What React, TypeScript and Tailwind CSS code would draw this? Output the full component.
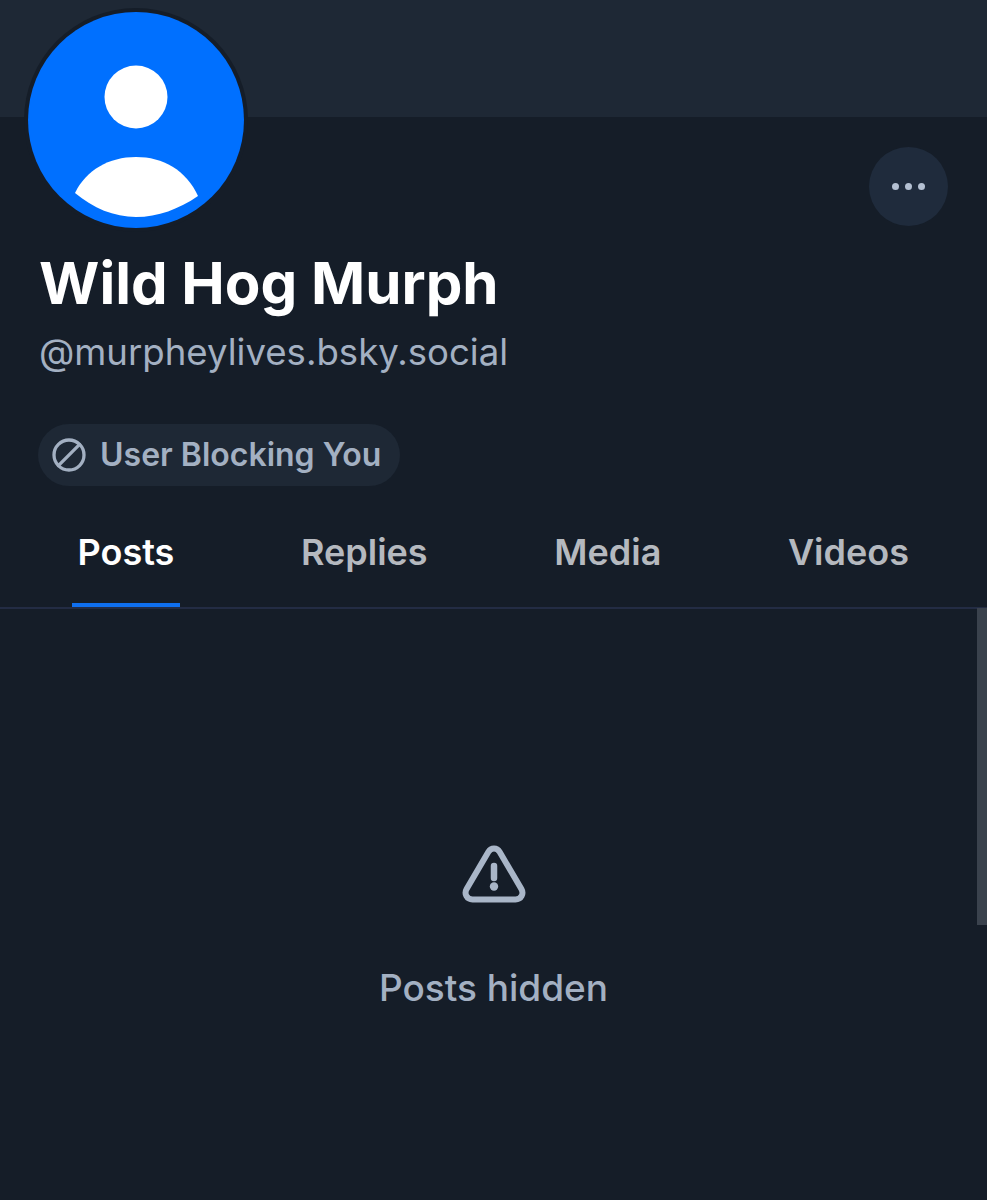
import { Ban } from 'lucide-react'

const tabs = ['Posts', 'Replies', 'Media', 'Videos']

function Avatar() {
  return (
    <div className="absolute left-[24px] top-[8px] h-[224px] w-[224px] rounded-full bg-[#151d28] p-[4px]">
      <svg viewBox="0 0 216 216" className="h-[216px] w-[216px]">
        <circle cx="108" cy="108" r="108" fill="#0070ff" />
        <circle cx="108" cy="85" r="31.5" fill="#fff" />
        <path d="M47 181 C58 158 81 145 108 145 C135 145 158 158 170 184 C151 197 130 205 108 205 C86 205 65 196 47 181 Z" fill="#fff" />
      </svg>
    </div>
  )
}

export default function App() {
  return (
    <div className="relative h-[1200px] w-[987px] overflow-hidden bg-[#151d28] font-['Inter',sans-serif]">
      <div className="h-[117px] bg-[#1e2835]" />
      <Avatar />

      <div className="flex justify-end pr-[39px] pt-[30px]">
        <button className="flex h-[79px] w-[79px] items-center justify-center gap-[6px] rounded-full bg-[#1f2b3c]">
          <span className="h-[7px] w-[7px] rounded-full bg-[#b4c0d2]" />
          <span className="h-[7px] w-[7px] rounded-full bg-[#b4c0d2]" />
          <span className="h-[7px] w-[7px] rounded-full bg-[#b4c0d2]" />
        </button>
      </div>

      <div className="px-[39px]">
        <h1 className="mt-[17px] text-[58.2px] font-bold leading-[80px] text-white">Wild Hog Murph</h1>
        <p className="mt-[4px] text-[36.6px] leading-[50px] text-[#a3b0c2]">@murpheylives.bsky.social</p>
        <div className="-ml-[1px] mt-[47px] inline-flex h-[62px] items-center gap-[13px] rounded-full bg-[#1e2835] pl-[13px] pr-[19px]">
          <Ban size={36} strokeWidth={2.2} className="text-[#a3b0c2] -scale-x-100" />
          <span className="text-[32px] font-semibold text-[#a3b0c2]">User Blocking You</span>
        </div>
      </div>

      <div className="mt-[15px] flex h-[108px] justify-between border-b-[2px] border-[#232c44] pl-[72px] pr-[72.5px]">
        {tabs.map((tab, i) => (
          <div key={tab} className={`flex h-full flex-col items-center justify-center border-b-[4px] px-[5.5px] text-[36px] font-semibold ${i === 0 ? 'border-[#0f6fef] text-white' : 'border-transparent text-[#b5b9bf]'}`}>
            {tab}
          </div>
        ))}
      </div>

      <div className="flex flex-col items-center pt-[236px]">
        <svg viewBox="0 0 64 58" className="h-[58px] w-[64px]" fill="none" stroke="#a9b6c8" strokeWidth="6" strokeLinejoin="round">
          <path d="M32 3.5 C29.5 3.5 27.6 4.8 26.3 7 L4.6 44 C2 48.6 4.6 54.5 10.5 54.5 L53.5 54.5 C59.4 54.5 62 48.6 59.4 44 L37.7 7 C36.4 4.8 34.5 3.5 32 3.5 Z" />
          <path d="M32 21 L32 33" strokeLinecap="round" strokeWidth="6.5" />
          <circle cx="32" cy="41.5" r="4.2" fill="#a9b6c8" stroke="none" />
        </svg>
        <p className="mt-[57px] text-[37px] font-medium text-[#a3b0c2]">Posts hidden</p>
      </div>

      <div className="absolute right-0 top-[608px] h-[317px] w-[10px] bg-[#3a424d]" />
    </div>
  )
}
